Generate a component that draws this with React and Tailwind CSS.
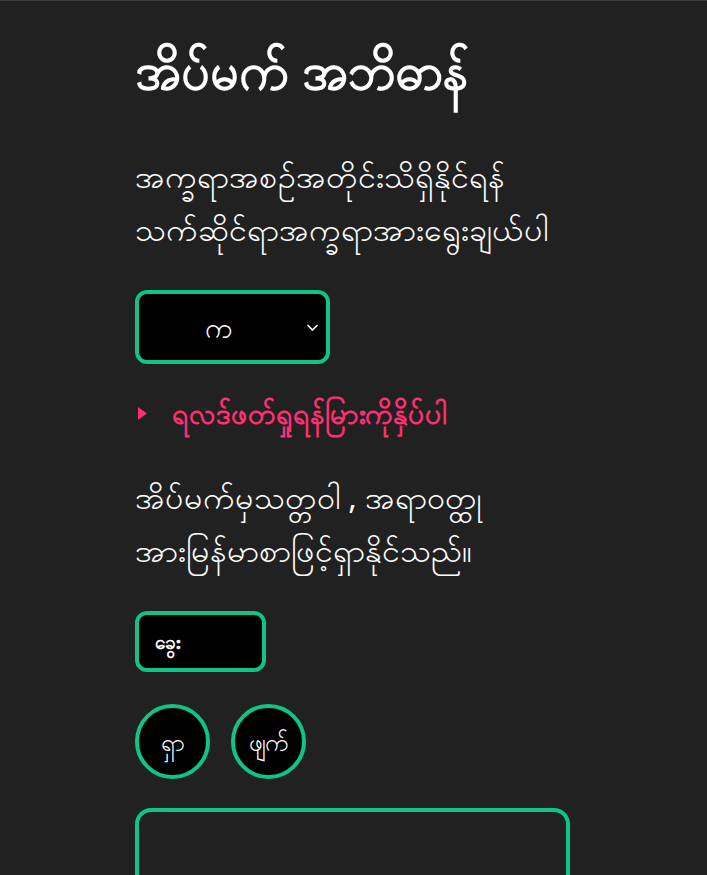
export default function App() {
  return (
    <div className="min-h-[875px] bg-[#212121] border-t border-t-[#3d3b38] text-white font-['Noto_Sans',sans-serif]">
      <div className="w-[435px] ml-[135px] flex flex-col items-start">
        <h1 className="mt-[34px] text-[50px] font-bold leading-[70px]">အိပ်မက် အဘိဓာန်</h1>
        <p className="mt-[44px] text-[32px] leading-[53px]">
          အက္ခရာအစဉ်အတိုင်းသိရှိနိုင်ရန်
          <br />
          သက်ဆိုင်ရာအက္ခရာအားရွေးချယ်ပါ
        </p>
        <div className="mt-[35px] relative w-[195px] h-[74px] bg-black border-4 border-[#0dc589] rounded-[12px] flex items-center justify-center pr-[27px]">
          <span className="text-[28px] leading-[40px]">က</span>
          <svg className="absolute right-[7px] top-[30px]" width="13" height="8" viewBox="0 0 13 8" fill="none" stroke="white" strokeWidth="1.7" strokeLinecap="round" strokeLinejoin="round">
            <path d="M2 1.5l4.5 4.5L11 1.5" />
          </svg>
        </div>
        <div className="mt-[29px] flex items-center text-[#ff2f73] font-bold">
          <svg width="9" height="13" viewBox="0 0 9 13" className="ml-[3px]">
            <path d="M0 0v13l9-6.5z" fill="#ff2f73" />
          </svg>
          <span className="ml-[25px] text-[28px] leading-[40px]">ရလဒ်ဖတ်ရှုရန်မြားကိုနှိပ်ပါ</span>
        </div>
        <p className="mt-[37px] text-[32px] leading-[53px]">
          အိပ်မက်မှသတ္တဝါ , အရာဝတ္ထု
          <br />
          အားမြန်မာစာဖြင့်ရှာနိုင်သည်။
        </p>
        <div className="mt-[35px] w-[131px] h-[61px] bg-black border-4 border-[#0dc589] rounded-[12px] flex items-center px-[16px]">
          <span className="text-[19px] font-bold leading-[30px]">ခွေး</span>
        </div>
        <div className="mt-[32px] flex gap-[21px]">
          <button className="w-[75px] h-[75px] rounded-full bg-black border-4 border-[#0dc589] text-[24px] leading-[30px] text-white flex items-center justify-center">ရှာ</button>
          <button className="w-[75px] h-[75px] rounded-full bg-black border-4 border-[#0dc589] text-[24px] leading-[30px] text-white flex items-center justify-center">ဖျက်</button>
        </div>
        <div className="mt-[29px] w-[435px] h-[200px] border-4 border-[#0dc589] rounded-[16px]"></div>
      </div>
    </div>
  )
}
